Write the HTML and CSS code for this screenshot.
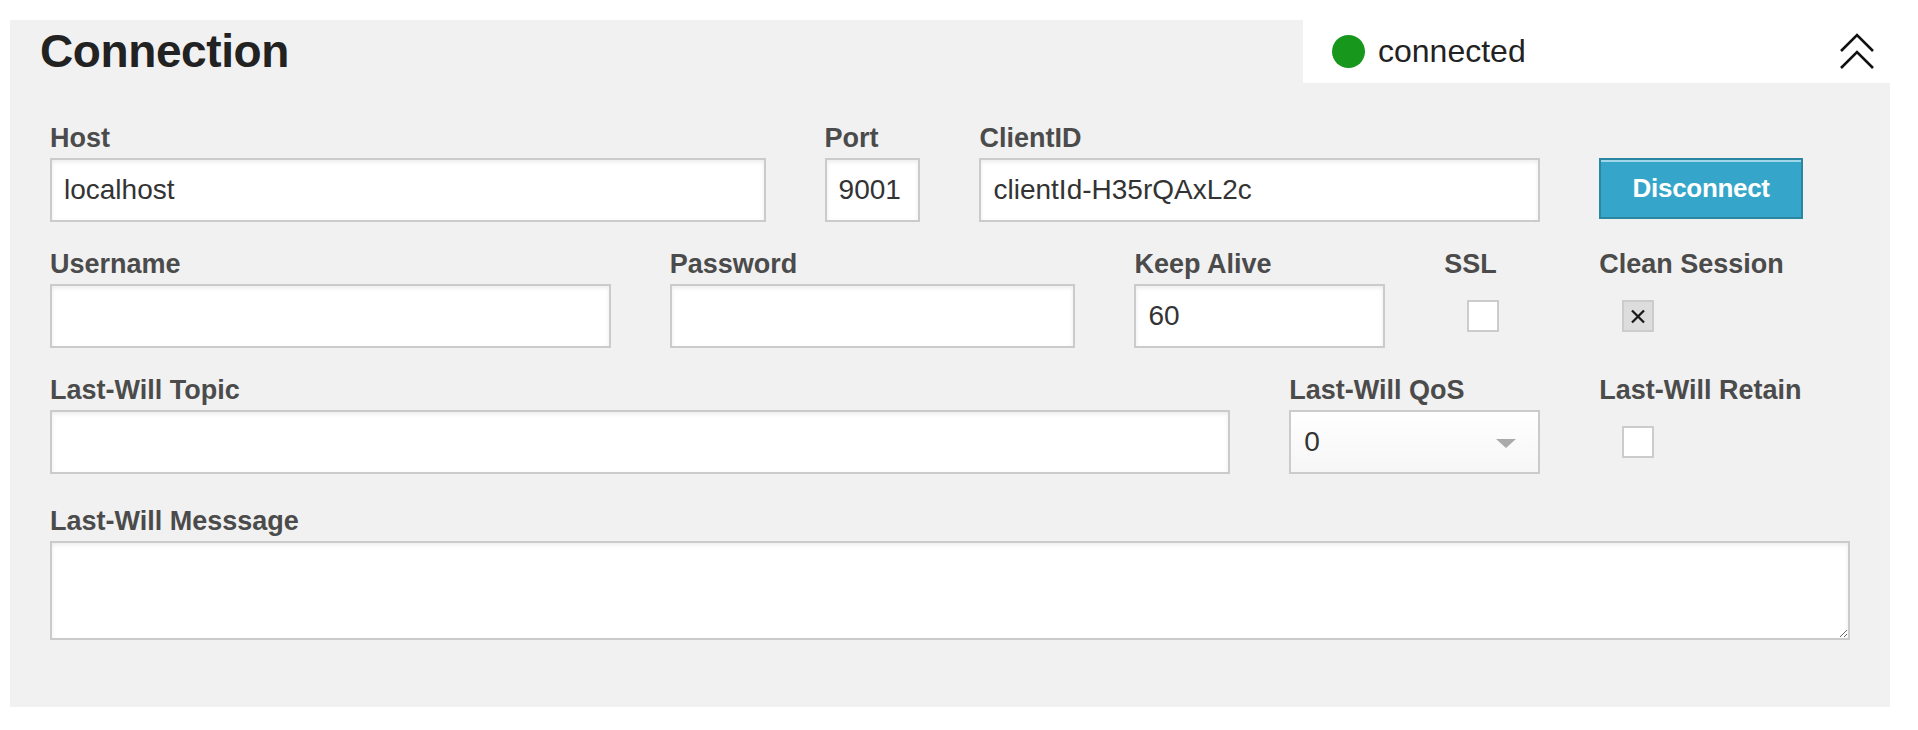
FILE: index.html
```html
<!DOCTYPE html>
<html lang="en">
<head>
<meta charset="utf-8">
<title>Connection</title>
<link rel="stylesheet" href="styles.css">
</head>
<body>
<section class="panel">
  <header class="header">
    <h2 class="title">Connection</h2>
    <div class="status">
      <span class="dot"></span>
      <span class="status-text">connected</span>
      <svg class="chevron" width="36" height="38" viewBox="0 0 36 38" aria-hidden="true">
        <polyline points="2,18 18,2 34,18" fill="none" stroke="#111" stroke-width="2.6"/>
        <polyline points="2,35 18,19 34,35" fill="none" stroke="#111" stroke-width="2.6"/>
      </svg>
    </div>
  </header>
  <form class="form">
    <div class="field span5">
      <label class="label">Host</label>
      <input class="input" type="text" value="localhost">
    </div>
    <div class="field span1">
      <label class="label">Port</label>
      <input class="input" type="text" value="9001">
    </div>
    <div class="field span4">
      <label class="label">ClientID</label>
      <input class="input" type="text" value="clientId-H35rQAxL2c">
    </div>
    <div class="field span2">
      <div class="label">&nbsp;</div>
      <button class="btn" type="button">Disconnect</button>
    </div>

    <div class="field span4">
      <label class="label">Username</label>
      <input class="input" type="text" value="">
    </div>
    <div class="field span3">
      <label class="label">Password</label>
      <input class="input" type="password" value="">
    </div>
    <div class="field span2">
      <label class="label">Keep Alive</label>
      <input class="input" type="text" value="60">
    </div>
    <div class="field span1">
      <label class="label">SSL</label>
      <div class="check-wrap"><span class="check"></span></div>
    </div>
    <div class="field span2">
      <label class="label">Clean Session</label>
      <div class="check-wrap">
        <span class="check checked">
          <svg width="16" height="15" viewBox="0 0 16 15" aria-hidden="true">
            <line x1="2" y1="1.5" x2="14" y2="13.5" stroke="#1a1a1a" stroke-width="2.3"/>
            <line x1="14" y1="1.5" x2="2" y2="13.5" stroke="#1a1a1a" stroke-width="2.3"/>
          </svg>
        </span>
      </div>
    </div>

    <div class="field span8">
      <label class="label">Last-Will Topic</label>
      <input class="input" type="text" value="">
    </div>
    <div class="field span2">
      <label class="label">Last-Will QoS</label>
      <div class="select"><span class="select-value">0</span></div>
    </div>
    <div class="field span2">
      <label class="label">Last-Will Retain</label>
      <div class="check-wrap"><span class="check"></span></div>
    </div>

    <div class="field span12 last-row">
      <label class="label">Last-Will Messsage</label>
      <textarea class="textarea"></textarea>
    </div>
  </form>
</section>
</body>
</html>
```

FILE: styles.css
```css
* { box-sizing: border-box; }

body {
  margin: 0;
  background: #ffffff;
  font-family: "Liberation Sans", Arial, Helvetica, sans-serif;
}

.panel {
  margin: 20px 28px 0 10px;
  height: 687px;
  background: #f1f1f1;
}

.header {
  display: flex;
  justify-content: space-between;
  align-items: flex-start;
  height: 63px;
}

.title {
  margin: 0 0 0 30px;
  font-size: 46px;
  line-height: 63px;
  font-weight: bold;
  color: #222222;
  letter-spacing: -0.4px;
}

.status {
  width: 587px;
  height: 63px;
  background: #ffffff;
  display: flex;
  align-items: center;
  padding: 0 15px 0 29px;
}

.dot {
  width: 33px;
  height: 33px;
  border-radius: 50%;
  background: #17981c;
  flex: none;
}

.status-text {
  margin-left: 13px;
  font-size: 32px;
  color: #222222;
  line-height: 1;
  padding-bottom: 2px;
}

.chevron {
  margin-left: auto;
  flex: none;
}

.form {
  display: grid;
  grid-template-columns: repeat(12, 1fr);
  column-gap: 59px;
  row-gap: 26px;
  padding: 39px 40px 0 40px;
}

.field {
  display: flex;
  flex-direction: column;
  min-width: 0;
}

.span1 { grid-column: span 1; }
.span2 { grid-column: span 2; }
.span3 { grid-column: span 3; }
.span4 { grid-column: span 4; }
.span5 { grid-column: span 5; }
.span8 { grid-column: span 8; }
.span12 { grid-column: span 12; }

.last-row { margin-top: 5px; }

.label {
  display: block;
  font-size: 27px;
  line-height: 32px;
  font-weight: bold;
  color: #4b4b4b;
  margin-bottom: 4px;
  white-space: nowrap;
}

.input {
  width: 100%;
  height: 64px;
  border: 2px solid #cbcbcb;
  border-radius: 0;
  background: #ffffff;
  box-shadow: inset 0 2px 4px rgba(0, 0, 0, 0.08);
  padding: 0 12px;
  font-family: "Liberation Sans", Arial, Helvetica, sans-serif;
  font-size: 28px;
  color: #333333;
  outline: none;
  margin: 0;
}

.btn {
  align-self: flex-start;
  width: 204px;
  height: 61px;
  margin: 0;
  border: 2px solid #2b86a4;
  background: #35a6ca;
  box-shadow: inset 0 2px 0 #9fd6e8;
  color: #ffffff;
  font-family: "Liberation Sans", Arial, Helvetica, sans-serif;
  font-size: 26px;
  font-weight: bold;
  letter-spacing: -0.3px;
  padding: 0;
}

.check-wrap {
  height: 64px;
  display: flex;
  align-items: center;
  padding-left: 23px;
}

.check {
  width: 32px;
  height: 32px;
  border: 2px solid #cccccc;
  background: #ffffff;
  display: flex;
  align-items: center;
  justify-content: center;
}

.check.checked {
  background: #dddddd;
}

.select {
  position: relative;
  height: 64px;
  border: 2px solid #cbcbcb;
  background: linear-gradient(180deg, #ffffff 0%, #f6f6f6 100%);
  display: flex;
  align-items: center;
  padding-left: 13px;
  font-size: 28px;
  color: #333333;
}

.select::after {
  content: "";
  position: absolute;
  right: 22px;
  top: 27px;
  width: 0;
  height: 0;
  border-left: 10px solid transparent;
  border-right: 10px solid transparent;
  border-top: 9px solid #aaaaaa;
}

.textarea {
  display: block;
  width: 100%;
  height: 99px;
  border: 2px solid #cbcbcb;
  border-radius: 0;
  background: #ffffff;
  box-shadow: inset 0 2px 4px rgba(0, 0, 0, 0.08);
  margin: 0;
  padding: 10px 12px;
  font-family: "Liberation Sans", Arial, Helvetica, sans-serif;
  font-size: 28px;
  outline: none;
}
```
